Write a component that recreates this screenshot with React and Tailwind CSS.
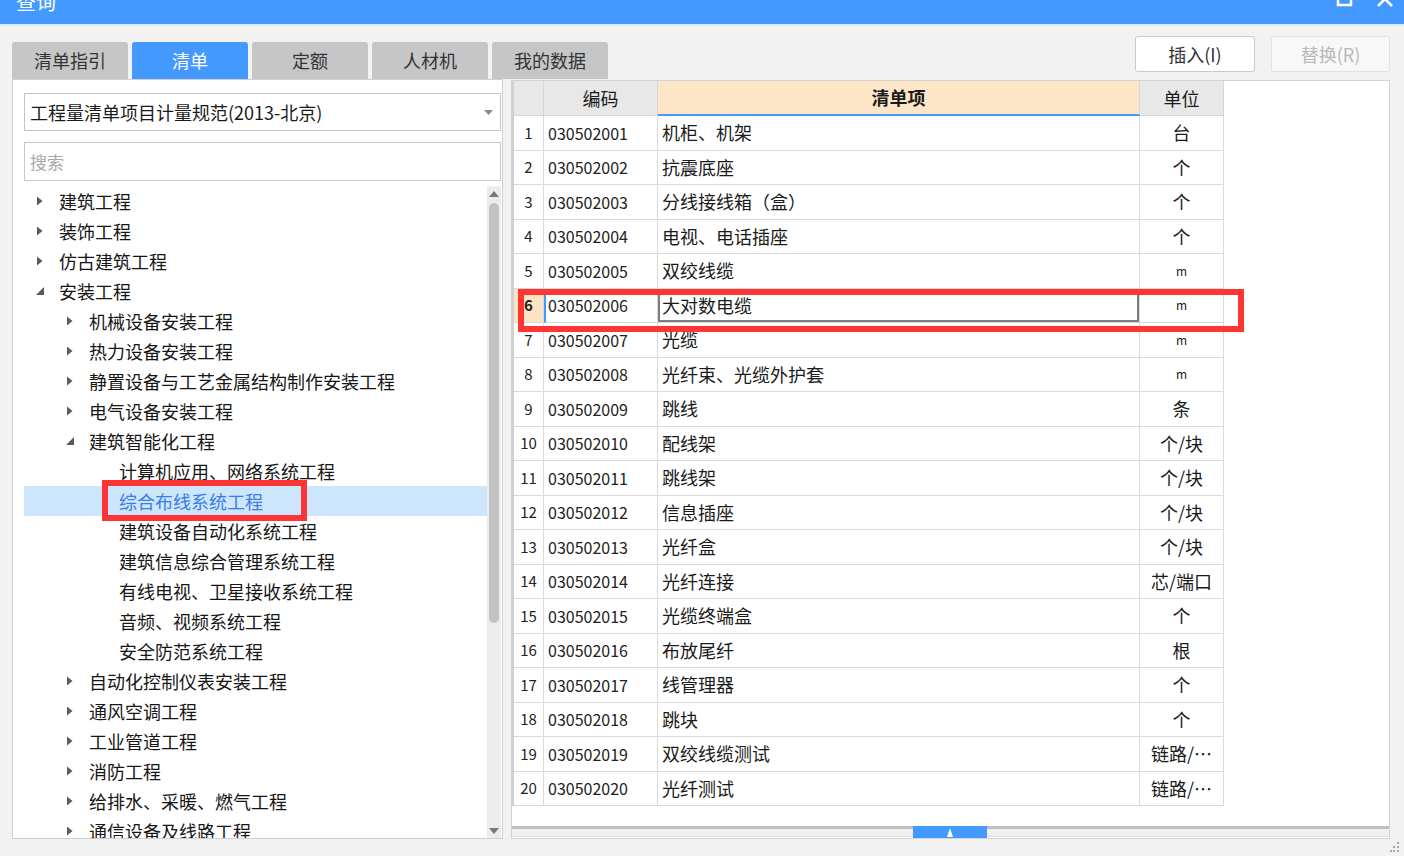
import React from "react";

const FONT = { fontFamily: '"Noto Sans CJK SC", "Liberation Sans", sans-serif' };

const tree = [
  { t: "建筑工程", l: 0, s: "c" },
  { t: "装饰工程", l: 0, s: "c" },
  { t: "仿古建筑工程", l: 0, s: "c" },
  { t: "安装工程", l: 0, s: "e" },
  { t: "机械设备安装工程", l: 1, s: "c" },
  { t: "热力设备安装工程", l: 1, s: "c" },
  { t: "静置设备与工艺金属结构制作安装工程", l: 1, s: "c" },
  { t: "电气设备安装工程", l: 1, s: "c" },
  { t: "建筑智能化工程", l: 1, s: "e" },
  { t: "计算机应用、网络系统工程", l: 2, s: "n" },
  { t: "综合布线系统工程", l: 2, s: "n", sel: true },
  { t: "建筑设备自动化系统工程", l: 2, s: "n" },
  { t: "建筑信息综合管理系统工程", l: 2, s: "n" },
  { t: "有线电视、卫星接收系统工程", l: 2, s: "n" },
  { t: "音频、视频系统工程", l: 2, s: "n" },
  { t: "安全防范系统工程", l: 2, s: "n" },
  { t: "自动化控制仪表安装工程", l: 1, s: "c" },
  { t: "通风空调工程", l: 1, s: "c" },
  { t: "工业管道工程", l: 1, s: "c" },
  { t: "消防工程", l: 1, s: "c" },
  { t: "给排水、采暖、燃气工程", l: 1, s: "c" },
  { t: "通信设备及线路工程", l: 1, s: "c" },
];

const indent = ["pl-[11px]", "pl-[41px]", "pl-[71px]"];

const rows = [
  ["030502001", "机柜、机架", "台"],
  ["030502002", "抗震底座", "个"],
  ["030502003", "分线接线箱（盒）", "个"],
  ["030502004", "电视、电话插座", "个"],
  ["030502005", "双绞线缆", "m"],
  ["030502006", "大对数电缆", "m"],
  ["030502007", "光缆", "m"],
  ["030502008", "光纤束、光缆外护套", "m"],
  ["030502009", "跳线", "条"],
  ["030502010", "配线架", "个/块"],
  ["030502011", "跳线架", "个/块"],
  ["030502012", "信息插座", "个/块"],
  ["030502013", "光纤盒", "个/块"],
  ["030502014", "光纤连接", "芯/端口"],
  ["030502015", "光缆终端盒", "个"],
  ["030502016", "布放尾纤", "根"],
  ["030502017", "线管理器", "个"],
  ["030502018", "跳块", "个"],
  ["030502019", "双绞线缆测试", "链路/…"],
  ["030502020", "光纤测试", "链路/…"],
];

const tabs = ["清单指引", "清单", "定额", "人材机", "我的数据"];

function Arrow({ s }) {
  if (s === "c")
    return (
      <svg width="8" height="10" viewBox="0 0 8 10" className="ml-[1px]">
        <path d="M1 0.5 L6.5 5 L1 9.5 Z" fill="#5a5a5a" />
      </svg>
    );
  if (s === "e")
    return (
      <svg width="10" height="10" viewBox="0 0 10 10">
        <path d="M9 1 L9 9 L1 9 Z" fill="#5a5a5a" />
      </svg>
    );
  return null;
}

export default function App() {
  return (
    <div
      className="w-[1404px] h-[856px] bg-[#f2f2f2] overflow-hidden relative text-[#1a1a1a]"
      style={FONT}
    >
      {/* title bar */}
      <div className="h-[24px] bg-[#4499ff] border-b-2 border-[#d9e8fa] box-content overflow-hidden relative flex">
        <span className="block ml-[16px] mt-[-8px] text-[20px] leading-[20px] text-white">查询</span>
        <svg className="absolute left-[1336px] top-[-9px]" width="18" height="16" viewBox="0 0 18 16">
          <rect x="2" y="2" width="13" height="12" fill="none" stroke="#fff" strokeWidth="2.5" />
        </svg>
        <svg className="absolute left-[1376px] top-[-9px]" width="18" height="16" viewBox="0 0 18 16">
          <path d="M2 1 L16 15 M16 1 L2 15" stroke="#fff" strokeWidth="2.5" />
        </svg>
      </div>

      <div className="flex pl-[12px]">
        {/* left column */}
        <div className="w-[491px] shrink-0 flex flex-col">
          <div className="mt-[16px] h-[37px] flex gap-[4px] w-[596px] relative z-10">
            {tabs.map((t, i) => (
              <div
                key={t}
                className={
                  i === 1
                    ? "w-[116px] shrink-0 h-[37px] rounded-t-[3px] bg-[#4499ff] text-white text-[18px] flex items-center justify-center"
                    : "w-[116px] shrink-0 h-[37px] rounded-t-[3px] bg-[#c6c6c6] text-[#333] text-[18px] flex items-center justify-center"
                }
              >
                {t}
              </div>
            ))}
          </div>
          <div className="h-[760px] bg-white border border-[#d0d0d0] flex flex-col pl-[11px] pr-[1px] pt-[13px]">
            <div className="h-[38px] border border-[#c4c4c4] flex items-center pl-[5px] pr-[6px] relative">
              <span className="text-[18px] leading-none text-[#1a1a1a]">工程量清单项目计量规范(2013-北京)</span>
              <svg className="absolute right-[7px] top-[16px]" width="9" height="5" viewBox="0 0 9 5">
                <path d="M0 0 L9 0 L4.5 5 Z" fill="#8a8a8a" />
              </svg>
            </div>
            <div className="mt-[11px] h-[39px] border border-[#c8c8c8] flex items-center pl-[5px]">
              <span className="text-[17px] leading-none text-[#a8a8a8]">搜索</span>
            </div>
            <div className="mt-[5px] flex flex-1 min-h-0 overflow-hidden">
              <div className="flex-1 min-w-0 overflow-hidden relative">
                {tree.map((n) => (
                  <div
                    key={n.t}
                    className={
                      (n.sel ? "bg-[#cce6fd] text-[#3b7de3] " : "text-[#161616] ") +
                      "h-[30px] flex items-center shrink-0 " +
                      indent[n.l]
                    }
                  >
                    <div className="w-[24px] flex items-center">
                      <Arrow s={n.s} />
                    </div>
                    <span className="text-[18px] leading-none whitespace-nowrap">{n.t}</span>
                  </div>
                ))}
                {/* red highlight box on tree */}
                <div className="absolute left-[78px] top-[294px] w-[205px] h-[41px] border-[6px] border-[#ff3535]" />
              </div>
              {/* scrollbar */}
              <div className="w-[14px] bg-[#ececec] relative flex flex-col items-center">
                <svg className="mt-[5px]" width="10" height="6" viewBox="0 0 10 6">
                  <path d="M0 6 L5 0 L10 6 Z" fill="#777" />
                </svg>
                <div className="mt-[6px] w-[10px] h-[420px] rounded-full bg-[#c2c2c2]" />
                <svg className="absolute bottom-[4px]" width="10" height="6" viewBox="0 0 10 6">
                  <path d="M0 0 L10 0 L5 6 Z" fill="#777" />
                </svg>
              </div>
            </div>
          </div>
        </div>

        {/* right column */}
        <div className="ml-[8px] w-[879px] shrink-0 flex flex-col">
          <div className="h-[54px] flex justify-end items-start gap-[16px] pt-[10px]">
            <div className="w-[120px] h-[36px] bg-white border border-[#c9c9c9] rounded-[3px] flex items-center justify-center text-[18px] text-[#333]">
              插入(I)
            </div>
            <div className="w-[119px] h-[36px] bg-[#f8f8f8] border border-[#e2e2e2] rounded-[3px] flex items-center justify-center text-[18px] text-[#b9b9b9]">
              替换(R)
            </div>
          </div>
          <div className="h-[759px] bg-white border border-[#d3d3d3] flex flex-col relative">
            <div className="flex-1 min-h-0">
              <div className="w-[712px] border-l-2 border-[#d0d0d0]">
                {/* header */}
                <div className="flex h-[35px]">
                  <div className="w-[30px] bg-[#e8e8e8] border-r border-b border-[#d6d6d6]" />
                  <div className="w-[114px] bg-[#e8e8e8] border-r border-b border-[#d6d6d6] flex items-center justify-center text-[18px]">
                    编码
                  </div>
                  <div className="w-[482px] bg-[#fde6c8] border-r border-[#d6d6d6] border-b-2 border-b-[#4499ff] flex items-center justify-center text-[18px] font-bold">
                    清单项
                  </div>
                  <div className="w-[84px] bg-[#e8e8e8] border-r border-b border-[#d6d6d6] flex items-center justify-center text-[18px]">
                    单位
                  </div>
                </div>
                {rows.map((r, i) => {
                  const sel = i === 5;
                  return (
                    <div key={r[0]} className="flex h-[34.5px]">
                      <div
                        className={
                          (sel ? "bg-[#fde3c4] font-bold " : "bg-white ") +
                          "w-[30px] border-r border-b border-[#dadada] flex items-center justify-center text-[15px] text-[#222]"
                        }
                      >
                        {i + 1}
                      </div>
                      <div
                        className={
                          (sel ? "border-l-2 border-l-[#4499ff] pl-[2px] " : "pl-[4px] ") +
                          "w-[114px] border-r border-b border-[#dadada] flex items-center text-[16px] text-[#222]"
                        }
                      >
                        {r[0]}
                      </div>
                      <div
                        className={
                          (sel ? "shadow-[inset_0_0_0_2px_#7c7c7c] " : "") +
                          "w-[482px] border-r border-b border-[#dadada] flex items-center pl-[4px] text-[18px] text-[#1a1a1a] whitespace-nowrap"
                        }
                      >
                        {r[1]}
                      </div>
                      <div
                        className={
                          (r[2] === "m" ? "text-[12px] " : "text-[18px] ") +
                          "w-[84px] border-r border-b border-[#dadada] flex items-center justify-center text-[#1a1a1a] whitespace-nowrap"
                        }
                      >
                        {r[2]}
                      </div>
                    </div>
                  );
                })}
              </div>
            </div>
            {/* splitter */}
            <div className="h-[12px] relative">
              <div className="h-[3px] bg-[#bfbfbf]" />
              <div className="h-[8px] bg-[#f0f0f0] border-b border-[#e0e0e0]" />
              <div className="absolute left-[401px] top-0 w-[74px] h-[12px] bg-[#4499ff] flex items-center justify-center">
                <svg width="8" height="9" viewBox="0 0 8 9">
                  <path d="M4 0 L7 9 L1 9 Z" fill="#fff" />
                </svg>
              </div>
            </div>
            {/* red highlight on table */}
            <div className="absolute left-[6px] top-[208px] w-[726px] h-[43px] border-[6px] border-[#ff3535]" />
          </div>
        </div>
      </div>

      {/* resize grip */}
      <svg className="absolute right-[4px] bottom-[3px]" width="10" height="12" viewBox="0 0 10 12">
        <g fill="#a9a9a9">
          <rect x="7" y="1" width="2" height="2" />
          <rect x="7" y="5" width="2" height="2" />
          <rect x="7" y="9" width="2" height="2" />
          <rect x="3" y="5" width="2" height="2" />
          <rect x="3" y="9" width="2" height="2" />
          <rect x="0" y="9" width="2" height="2" />
        </g>
      </svg>
    </div>
  );
}
